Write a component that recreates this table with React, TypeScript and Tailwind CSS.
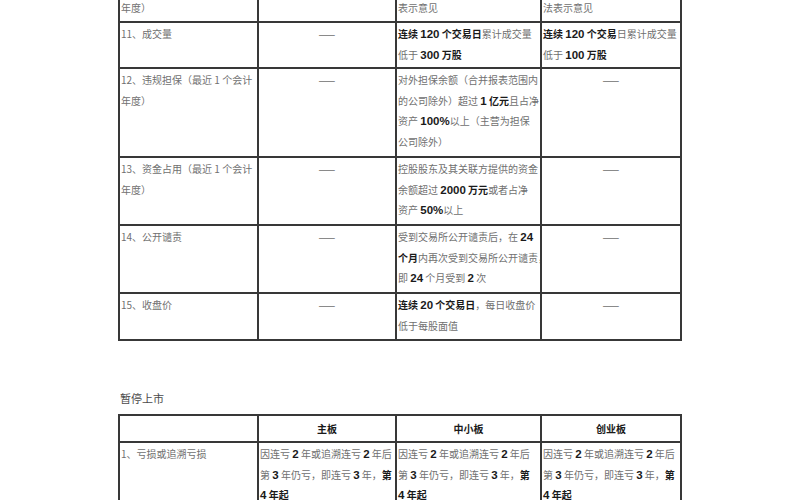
type Seg = { t: string; b?: boolean; n?: boolean };
type Line = Seg[];
type Cell = { lines: Line[]; center?: boolean };
type Row = { h: string; cells: Cell[]; open?: boolean };

const DASH: Cell = { lines: [[{ t: "——" }]], center: true };

const t = (s: string): Seg => ({ t: s });
const b = (s: string): Seg => ({ t: s, b: true });
const n = (s: string): Seg => ({ t: s, b: true, n: true });

const UPPER_ROWS: Row[] = [
	{
		h: "h-[22px]",
		open: true,
		cells: [
			{ lines: [[t("年度）")]] },
			{ lines: [] },
			{ lines: [[t("表示意见")]] },
			{ lines: [[t("法表示意见")]] },
		],
	},
	{
		h: "h-[46px]",
		cells: [
			{ lines: [[t("11、成交量")]] },
			DASH,
			{
				lines: [
					[b("连续 "), n("120"), b(" 个交易日"), t("累计成交量")],
					[t("低于 "), n("300"), b(" 万股")],
				],
			},
			{
				lines: [
					[b("连续 "), n("120"), b(" 个交易"), t("日累计成交量")],
					[t("低于 "), n("100"), b(" 万股")],
				],
			},
		],
	},
	{
		h: "h-[89px]",
		cells: [
			{ lines: [[t("12、违规担保（最近 1 个会计")], [t("年度）")]] },
			DASH,
			{
				lines: [
					[t("对外担保余额（合并报表范围内")],
					[t("的公司除外）超过 "), n("1"), b(" 亿元"), t("且占净")],
					[t("资产 "), n("100%"), t("以上（主营为担保")],
					[t("公司除外）")],
				],
			},
			DASH,
		],
	},
	{
		h: "h-[68px]",
		cells: [
			{ lines: [[t("13、资金占用（最近 1 个会计")], [t("年度）")]] },
			DASH,
			{
				lines: [
					[t("控股股东及其关联方提供的资金")],
					[t("余额超过 "), n("2000"), b(" 万元"), t("或者占净")],
					[t("资产 "), n("50%"), t("以上")],
				],
			},
			DASH,
		],
	},
	{
		h: "h-[68px]",
		cells: [
			{ lines: [[t("14、公开谴责")]] },
			DASH,
			{
				lines: [
					[t("受到交易所公开谴责后，在 "), n("24")],
					[b("个月"), t("内再次受到交易所公开谴责，")],
					[t("即 "), n("24"), t(" 个月受到 "), n("2"), t(" 次")],
				],
			},
			DASH,
		],
	},
	{
		h: "h-[47px]",
		cells: [
			{ lines: [[t("15、收盘价")]] },
			DASH,
			{
				lines: [
					[b("连续 "), n("20"), b(" 个交易日"), t("，每日收盘价")],
					[t("低于每股面值")],
				],
			},
			DASH,
		],
	},
];

const LOSS: Cell = {
	lines: [
		[t("因连亏 "), n("2"), t(" 年或追溯连亏 "), n("2"), t(" 年后")],
		[t("第 "), n("3"), t(" 年仍亏，即连亏 "), n("3"), t(" 年，"), b("第")],
		[n("4"), b(" 年起")],
	],
};

const LOWER_ROWS: Row[] = [
	{
		h: "h-[26px]",
		cells: [
			{ lines: [] },
			{ lines: [[b("主板")]], center: true },
			{ lines: [[b("中小板")]], center: true },
			{ lines: [[b("创业板")]], center: true },
		],
	},
	{
		h: "h-[80px]",
		cells: [{ lines: [[t("1、亏损或追溯亏损")]] }, LOSS, LOSS, LOSS],
	},
];

function CellText({ cell, header }: { cell: Cell; header?: boolean }) {
	return (
		<div
			className={
				cell.center
					? "flex flex-col items-center"
					: "flex flex-col items-start"
			}
		>
			{cell.lines.map((line, i) => (
				<div
					key={i}
					className={
						header
							? "whitespace-nowrap leading-[24px]"
							: "whitespace-nowrap leading-[20.5px]"
					}
				>
					{line.map((seg, j) => (
						<span
							key={j}
							className={
								seg.n
									? "font-['Liberation_Sans',sans-serif] text-[11.5px] font-bold text-[#1a1a1a]"
									: seg.b
										? "font-bold text-[#1a1a1a]"
										: "text-[#707070]"
							}
						>
							{seg.t}
						</span>
					))}
				</div>
			))}
		</div>
	);
}

function DocTable({ rows, top }: { rows: Row[]; top?: boolean }) {
	return (
		<table
			className={
				top
					? "ml-[118px] w-[562px] table-fixed border-collapse border-x-2 border-b-2 border-[#383838]"
					: "ml-[118px] w-[562px] table-fixed border-collapse border-2 border-[#383838]"
			}
		>
			<colgroup>
				<col className="w-[139px]" />
				<col className="w-[138px]" />
				<col className="w-[145px]" />
				<col className="w-[140px]" />
			</colgroup>
			<tbody>
				{rows.map((row, ri) => (
					<tr
						key={ri}
						className={
							row.open
								? `${row.h} border-b-2 border-[#383838]`
								: `${row.h} border-y-2 border-[#383838]`
						}
					>
						{row.cells.map((cell, ci) => (
							<td
								key={ci}
								className={
									row.open
										? "overflow-hidden border-x-2 border-[#383838] px-[1px] align-top -translate-y-[2px]"
										: "overflow-hidden border-x-2 border-[#383838] px-[1px] pt-[1px] align-top"
								}
							>
								<CellText cell={cell} header={!top && ri === 0} />
							</td>
						))}
					</tr>
				))}
			</tbody>
		</table>
	);
}

export default function App() {
	return (
		<div className="h-[500px] w-[800px] overflow-hidden bg-white font-['Noto_Sans_CJK_SC','Liberation_Sans',sans-serif] text-[10px] tracking-[0px]">
			<DocTable rows={UPPER_ROWS} top />
			<div className="ml-[120px] mt-[47px] text-[11px] leading-[20px] text-[#4a4a4a]">
				暂停上市
			</div>
			<div className="mt-[6px]">
				<DocTable rows={LOWER_ROWS} />
			</div>
		</div>
	);
}
